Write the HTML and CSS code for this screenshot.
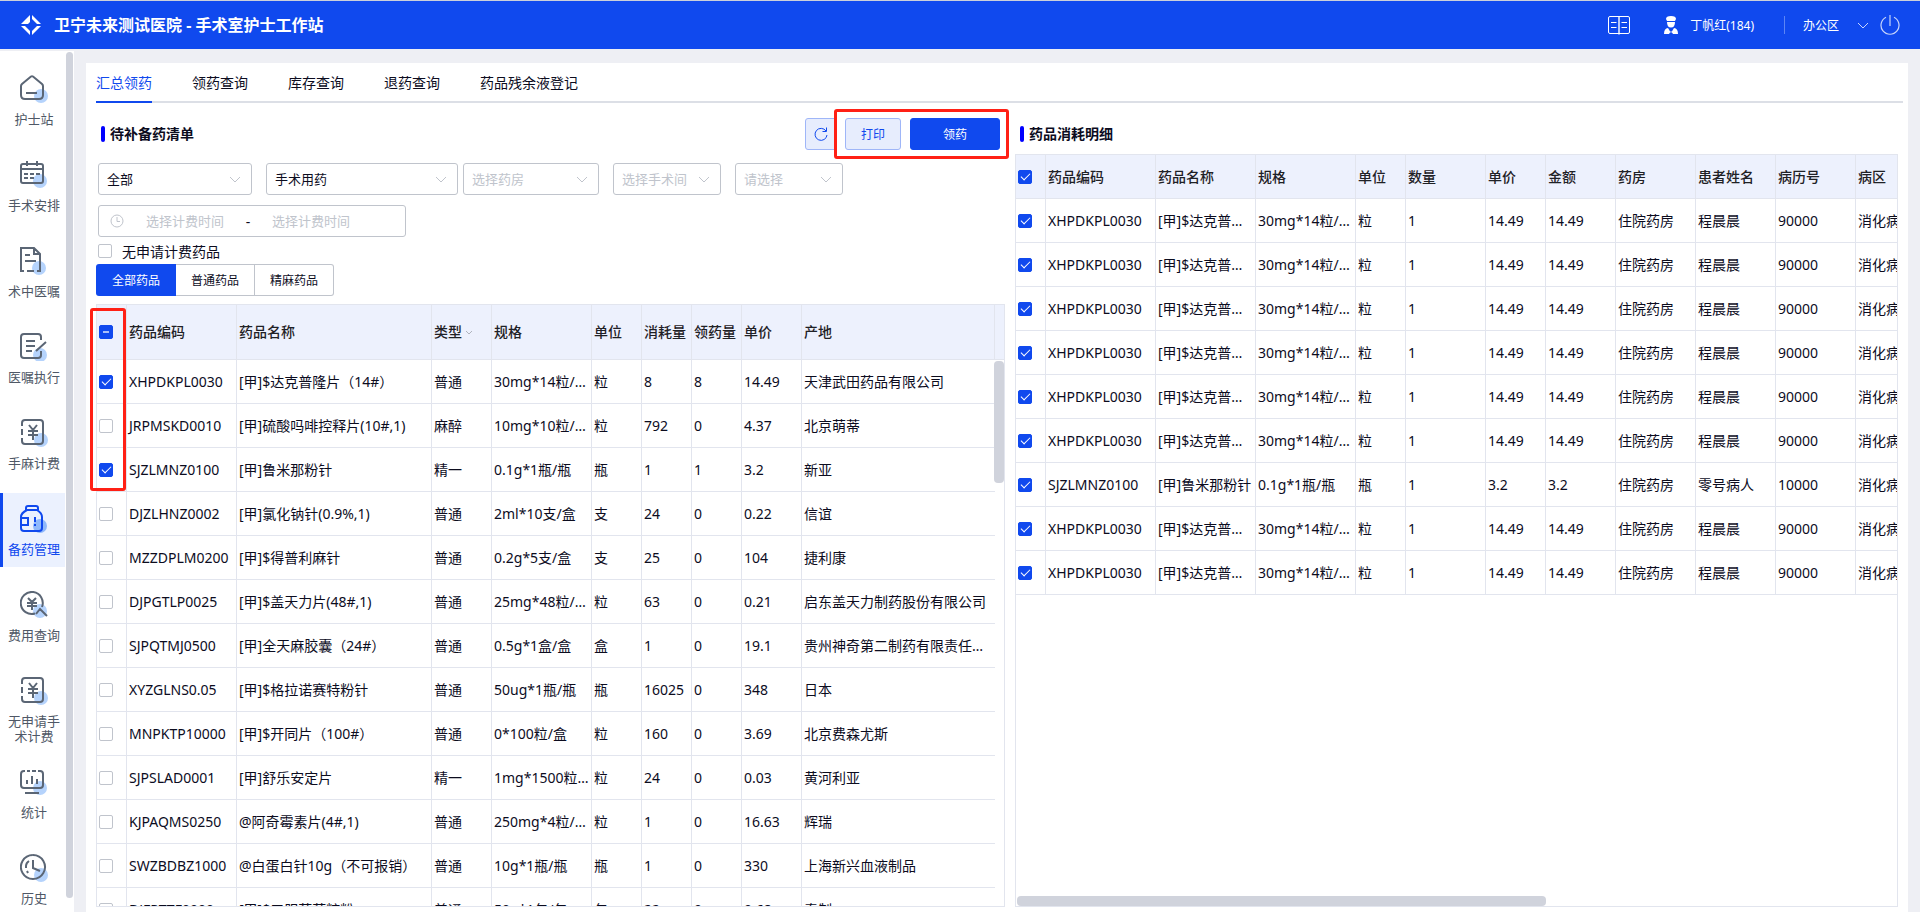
FILE: index.html
```html
<!DOCTYPE html>
<html lang="zh-CN">
<head>
  <meta charset="UTF-8" />
  <title>手术室护士工作站</title>
  <link rel="stylesheet" href="styles.css">
</head>
<body>
  <header class="topbar">
    <svg class="logo" viewBox="0 0 22 22" width="22" height="22" fill="#fff">
      <path d="M10 1 V8 L8 10 H1 Z"/>
      <path d="M12 1 L21 10 H17 L12 5 Z"/>
      <path d="M1 12 H5 L10 17 V21 Z"/>
      <path d="M21 12 L12 21 V17 L17 12 Z"/>
    </svg>
    <h1>卫宁未来测试医院 - 手术室护士工作站</h1>
    <div class="topbar-right">
      <svg class="book" viewBox="0 0 22 20" width="22" height="20" fill="none" stroke="#fff">
        <path d="M2 1.500 H20 Q21.500 1.500 21.500 3 V17 Q21.500 18.500 20 18.500 H2 Q.5 18.500 .5 17 V3 Q.5 1.500 2 1.500 Z"/>
        <path d="M11 2 V19.500" stroke-width="2" opacity=".7"/>
        <path d="M3 7.500 H8.500 M3 12.500 H8.500 M13.500 7.500 H19 M13.500 12.500 H19"/>
      </svg>
      <svg class="nurse" viewBox="0 0 14 18" width="14" height="18" fill="#fff">
        <path d="M2 3 Q2 0 7 0 Q12 0 12 3 L11 5 H3 Z"/>
        <path d="M3 6 H11 Q11 11.500 7 11.500 Q3 11.500 3 6 Z"/>
        <path d="M0 18 Q0 12.500 4 12 L7 17 L10 12 Q14 12.500 14 18 H9 L7 15 L5 18 Z"/>
      </svg>
      <span class="user-name">丁帆红(184)</span>
      <span class="divider"></span>
      <span>办公区</span>
      <svg class="area-arrow" viewBox="0 0 12 7" width="12" height="7" fill="none" stroke="#c7d5fb"><path d="M1 1 L6 6 L11 1"/></svg>
      <svg viewBox="0 0 20 20" width="20" height="20" fill="none" stroke="#c7d5fb" stroke-width="1.200"><path d="M6 2.200 A9 9 0 1 0 14 2.200 M10 0 V11"/></svg>
    </div>
  </header>

  <div class="layout">
    <nav class="sidebar">
      <a class="nav-item" href="#">
        <svg viewBox="0 0 28 28" width="28" height="28"><circle cx="21" cy="21" r="7"/>
          <path d="M11 1.500 Q12 .8 13 1.500 L22 9 Q23 10 23 11 V20 Q23 24 19 24 H5 Q1 24 1 20 V11 Q1 10 2 9 Z M6 18 H17"/></svg>
        <span>护士站</span>
      </a>
      <a class="nav-item" href="#">
        <svg viewBox="0 0 28 28" width="28" height="28"><circle cx="20" cy="20" r="7"/>
          <path d="M1 5 Q1 3 3 3 H21 Q23 3 23 5 V20 Q23 22 21 22 H3 Q1 22 1 20 Z M1 8 H23 M7 0 V5 M17 0 V5 M4 13 H8 M10 13 H14 M16 13 H20 M4 17 H8 M10 17 H14"/></svg>
        <span>手术安排</span>
      </a>
      <a class="nav-item" href="#">
        <svg viewBox="0 0 28 28" width="28" height="28"><circle cx="19" cy="21" r="7"/>
          <path d="M4 24 H1 V1 H14 L20 7 V24 H17 M7 24 H14 M14 1 V7 H20 M5 8 H10 M5 14 H16"/></svg>
        <span>术中医嘱</span>
      </a>
      <a class="nav-item" href="#">
        <svg viewBox="0 0 28 28" width="28" height="28"><circle cx="20" cy="22" r="7"/>
          <path d="M21 7 V4 Q21 1 18 1 H4 Q1 1 1 4 V22 Q1 25 4 25 H18 Q21 25 21 22 V18 M26 9 L16 18 M6 8 H15 M6 13 H15 M6 18 H12"/></svg>
        <span>医嘱执行</span>
      </a>
      <a class="nav-item" href="#">
        <svg viewBox="0 0 28 28" width="28" height="28"><circle cx="21" cy="21" r="7"/>
          <path d="M2 7 V4 Q2 1 5 1 H20 Q23 1 23 4 V22 Q23 25 20 25 H5 Q2 25 2 22 V19 M2 10 V16 M9 6 L13 11 L17 6 M8 12 H18 M8 16 H18 M13 11 V21"/></svg>
        <span>手麻计费</span>
      </a>
      <a class="nav-item active" href="#">
        <svg viewBox="0 0 28 28" width="28" height="28"><circle cx="20" cy="21" r="7"/>
          <path d="M6 5 V3 Q6 1 8 1 H16 Q18 1 18 3 V5 M7 5 H17 Q22 8 22 12 V23 Q22 26 19 26 H4 Q1 26 1 23 V12 Q1 8 7 5 M1 13 H8 V20 H1 M15 12 V17 M15 19 V21"/></svg>
        <span>备药管理</span>
      </a>
      <a class="nav-item" href="#">
        <svg viewBox="0 0 28 28" width="28" height="28"><circle cx="20" cy="20" r="7"/>
          <path d="M15 22.500 A11 11 0 1 1 22 16 M8 7 L12 11 L16 7 M7 12 H17 M7 15 H17 M12 11 V19 M16 23 L20 18 L27 25"/></svg>
        <span>费用查询</span>
      </a>
      <a class="nav-item" href="#">
        <svg viewBox="0 0 28 28" width="28" height="28"><circle cx="21" cy="21" r="7"/>
          <path d="M2 7 V4 Q2 1 5 1 H20 Q23 1 23 4 V22 Q23 25 20 25 H5 Q2 25 2 22 V19 M2 10 V16 M9 6 L13 11 L17 6 M8 12 H18 M8 16 H18 M13 11 V21"/></svg>
        <span>无申请手术计费</span>
      </a>
      <a class="nav-item" href="#">
        <svg viewBox="0 0 28 28" width="28" height="28"><circle cx="20" cy="20" r="7"/>
          <path d="M5 3 H4 Q1 3 1 6 V17 Q1 20 4 20 H20 Q23 20 23 17 V6 Q23 3 20 3 H18 M7 3 H10 M12 3 H16 M7 12 V16 M12 8 V16 M17 11 V16 M5 25 H19"/></svg>
        <span>统计</span>
      </a>
      <a class="nav-item" href="#">
        <svg viewBox="0 0 28 28" width="28" height="28"><circle cx="21" cy="21" r="7"/>
          <path d="M13 1 A12 12 0 1 1 12.900 1 M13 6 V14 L20 17 M9 7 Q6 9 6 12 V14 M7 17 L8 19"/></svg>
        <span>历史</span>
      </a>
    </nav>
    <div class="sidebar-scroll"><div class="sidebar-thumb"></div></div>

    <main class="main">
      <div class="tabs">
        <a class="tab active" href="#">汇总领药</a>
        <a class="tab" href="#">领药查询</a>
        <a class="tab" href="#">库存查询</a>
        <a class="tab" href="#">退药查询</a>
        <a class="tab" href="#">药品残余液登记</a>
      </div>

      <div class="panels">
        <section class="panel">
          <div class="panel-head">
            <h2>待补备药清单</h2>
            <button class="btn btn-plain btn-refresh" type="button" aria-label="刷新">
              <svg viewBox="0 0 14 14" width="14" height="14" fill="none" stroke="currentColor"><path d="M12 4 A6 6 0 1 0 13 8 M12.500 .5 V4.500 H8.500"/></svg>
            </button>
            <div class="marked">
              <button class="btn btn-plain btn-print" type="button">打印</button>
              <button class="btn btn-primary btn-take" type="button">领药</button>
              <span class="mark mark-buttons"></span>
            </div>
          </div>

          <div class="filters">
            <div class="select select-scope">
              <select aria-label="范围"><option>全部</option></select>
              <svg viewBox="0 0 12 7" width="12" height="7"><path d="M1 1 L6 6 L11 1"/></svg>
            </div>
            <div class="select select-use">
              <select aria-label="用药类型"><option>手术用药</option></select>
              <svg viewBox="0 0 12 7" width="12" height="7"><path d="M1 1 L6 6 L11 1"/></svg>
            </div>
            <div class="select select-pharmacy">
              <select class="empty" aria-label="药房"><option>选择药房</option></select>
              <svg viewBox="0 0 12 7" width="12" height="7"><path d="M1 1 L6 6 L11 1"/></svg>
            </div>
            <div class="select select-room">
              <select class="empty" aria-label="手术间"><option>选择手术间</option></select>
              <svg viewBox="0 0 12 7" width="12" height="7"><path d="M1 1 L6 6 L11 1"/></svg>
            </div>
            <div class="select select-room">
              <select class="empty" aria-label="其他"><option>请选择</option></select>
              <svg viewBox="0 0 12 7" width="12" height="7"><path d="M1 1 L6 6 L11 1"/></svg>
            </div>
          </div>

          <div class="date-range">
            <svg viewBox="0 0 14 14" width="14" height="14" fill="none" stroke="#c0c4cc"><circle cx="7" cy="7" r="6"/><path d="M7 3 V7.500 H10"/></svg>
            <input type="text" placeholder="选择计费时间" aria-label="开始时间">
            <span>-</span>
            <input type="text" placeholder="选择计费时间" aria-label="结束时间">
          </div>

          <label class="check-line"><input type="checkbox"> 无申请计费药品</label>

          <div class="segment">
            <button class="active" type="button">全部药品</button>
            <button type="button">普通药品</button>
            <button type="button">精麻药品</button>
          </div>

          <div class="table-area">
            <div class="table-wrap">
              <table class="drug-table">
                <colgroup>
                  <col class="w30"><col class="w110"><col class="w195"><col class="w60"><col class="w100"><col class="w50">
                  <col class="w50"><col class="w50"><col class="w60"><col><col class="w9">
                </colgroup>
                <thead>
                  <tr>
                    <th><input type="checkbox" id="check-all" aria-label="全选"></th>
                    <th>药品编码</th><th>药品名称</th>
                    <th>类型<svg class="th-arrow" viewBox="0 0 8 5" width="8" height="5"><path d="M1 1 L4 4 L7 1"/></svg></th>
                    <th>规格</th><th>单位</th><th>消耗量</th><th>领药量</th><th>单价</th><th>产地</th><th></th>
                  </tr>
                </thead>
                <tbody id="drug-rows"></tbody>
              </table>
              <div class="thumb-v"></div>
            </div>
            <span class="mark mark-checks"></span>
          </div>
        </section>

        <section class="panel">
          <div class="panel-head">
            <h2>药品消耗明细</h2>
          </div>
          <div class="table-area detail-area">
            <div class="table-wrap">
              <table class="detail-table">
                <colgroup>
                  <col class="w30"><col class="w110"><col class="w100"><col class="w100"><col class="w50"><col class="w80">
                  <col class="w60"><col class="w70"><col class="w80"><col class="w80"><col class="w80"><col class="w110">
                </colgroup>
                <thead>
                  <tr>
                    <th><input type="checkbox" checked aria-label="全选"></th>
                    <th>药品编码</th><th>药品名称</th><th>规格</th><th>单位</th><th>数量</th>
                    <th>单价</th><th>金额</th><th>药房</th><th>患者姓名</th><th>病历号</th><th>病区</th>
                  </tr>
                </thead>
                <tbody id="detail-rows"></tbody>
              </table>
              <div class="thumb-h"></div>
            </div>
          </div>
        </section>
      </div>
    </main>
  </div>

  <script>
    const drugs = [
      [1, 'XHPDKPL0030', '[甲]$达克普隆片（14#）', '普通', '30mg*14粒/盒装', '粒', '8', '8', '14.49', '天津武田药品有限公司'],
      [0, 'JRPMSKD0010', '[甲]硫酸吗啡控释片(10#,1)', '麻醉', '10mg*10粒/盒装', '粒', '792', '0', '4.37', '北京萌蒂'],
      [1, 'SJZLMNZ0100', '[甲]鲁米那粉针', '精一', '0.1g*1瓶/瓶', '瓶', '1', '1', '3.2', '新亚'],
      [0, 'DJZLHNZ0002', '[甲]氯化钠针(0.9%,1)', '普通', '2ml*10支/盒', '支', '24', '0', '0.22', '信谊'],
      [0, 'MZZDPLM0200', '[甲]$得普利麻针', '普通', '0.2g*5支/盒', '支', '25', '0', '104', '捷利康'],
      [0, 'DJPGTLP0025', '[甲]$盖天力片(48#,1)', '普通', '25mg*48粒/盒装', '粒', '63', '0', '0.21', '启东盖天力制药股份有限公司'],
      [0, 'SJPQTMJ0500', '[甲]全天麻胶囊（24#）', '普通', '0.5g*1盒/盒', '盒', '1', '0', '19.1', '贵州神奇第二制药有限责任公司'],
      [0, 'XYZGLNS0.05', '[甲]$格拉诺赛特粉针', '普通', '50ug*1瓶/瓶', '瓶', '16025', '0', '348', '日本'],
      [0, 'MNPKTP10000', '[甲]$开同片（100#）', '普通', '0*100粒/盒', '粒', '160', '0', '3.69', '北京费森尤斯'],
      [0, 'SJPSLAD0001', '[甲]舒乐安定片', '精一', '1mg*1500粒/瓶', '粒', '24', '0', '0.03', '黄河利亚'],
      [0, 'KJPAQMS0250', '@阿奇霉素片(4#,1)', '普通', '250mg*4粒/盒装', '粒', '1', '0', '16.63', '辉瑞'],
      [0, 'SWZBDBZ1000', '@白蛋白针10g（不可报销）', '普通', '10g*1瓶/瓶', '瓶', '1', '0', '330', '上海新兴血液制品'],
      [0, 'DJFPTTF0000', '[甲]$口服葡萄糖粉', '普通', '50g*1包/包', '包', '22', '0', '0.68', '奉制']
    ];

    const lansoprazole = ['XHPDKPL0030', '[甲]$达克普隆片（14#）', '30mg*14粒/盒装', '粒', '1', '14.49', '14.49', '住院药房', '程晨晨', '90000', '消化病区'];
    const luminal = ['SJZLMNZ0100', '[甲]鲁米那粉针', '0.1g*1瓶/瓶', '瓶', '1', '3.2', '3.2', '住院药房', '零号病人', '10000', '消化病区'];
    const details = Array(9).fill(lansoprazole);
    details[6] = luminal;

    function row(checked, cells) {
      const box = `<td><input type="checkbox" aria-label="选择 ${cells[0]}"${checked ? ' checked' : ''}></td>`;
      return `<tr>${box}${cells.map(c => `<td>${c}</td>`).join('')}</tr>`;
    }

    document.getElementById('drug-rows').innerHTML = drugs.map(d => row(d[0], [...d.slice(1), ''])).join('');
    document.getElementById('detail-rows').innerHTML = details.map(d => row(true, d)).join('');
    document.getElementById('check-all').indeterminate = true;
  </script>
</body>
</html>
```

FILE: styles.css
```css
* {
  box-sizing: border-box;
}
body {
  margin: 0;
  height: 100vh;
  display: flex;
  flex-direction: column;
  overflow: hidden;
  background-color: #eeeff4;
  color: #0c0c1e;
  font-family: "Noto Sans", "Noto Sans CJK SC", sans-serif;
  font-size: 14px;
}
h1, h2 {
  margin: 0;
}
a {
  color: inherit;
  text-decoration: none;
}
button, input, select {
  font-family: inherit;
}

/* top bar */
.topbar {
  display: flex;
  align-items: center;
  height: 49px;
  padding: 0 20px;
  border-top: 1px solid #ccd0da;
  background-color: #1049ee;
  color: white;
}
.logo {
  margin-right: 12px;
}
.topbar h1 {
  font-size: 16px;
  line-height: 24px;
}
.topbar-right {
  display: flex;
  align-items: center;
  margin-left: auto;
  font-size: 12px;
}
.book {
  margin-right: 34px;
}
.nurse {
  margin-right: 12px;
}
.divider {
  width: 1px;
  height: 18px;
  margin: 0 18px 0 30px;
  background-color: #5c85f5;
}
.area-arrow {
  margin: 0 11px 0 18px;
}

/* sidebar */
.layout {
  flex: 1;
  min-height: 0;
  display: flex;
  padding-top: 2px;
}
.sidebar {
  width: 65px;
  padding-top: 12px;
  overflow: hidden;
  background-color: white;
}
.nav-item {
  display: flex;
  flex-direction: column;
  align-items: center;
  min-height: 74px;
  margin-bottom: 12px;
  padding-top: 12px;
  border-left: 3px solid transparent;
  color: #4f5866;
  font-size: 13px;
  line-height: 15px;
  text-align: center;
}
.nav-item span {
  width: 54px;
  margin-top: 9px;
}
.nav-item svg {
  flex: none;
  fill: none;
  stroke: #5b6675;
  stroke-width: 2;
}
.nav-item circle {
  fill: #b5d3fc;
  stroke: none;
}
.nav-item.active {
  border-left-color: #1049ee;
  background-color: #ebf1fe;
  color: #1049ee;
}
.nav-item.active svg {
  stroke: #1049ee;
}
.nav-item.active circle {
  fill: #8fb8fa;
}
.sidebar-scroll {
  width: 9px;
  padding: 1px 1px 14px;
  background-color: white;
}
.sidebar-thumb {
  height: 100%;
  border-radius: 4px;
  background-color: #d0d3dc;
}

/* main */
.main {
  flex: 1;
  min-width: 0;
  display: flex;
  flex-direction: column;
  margin: 12px 12px 0;
  padding: 0 5px 5px 10px;
  background-color: white;
}
.tabs {
  display: flex;
  gap: 40px;
  border-bottom: 2px solid #dcdfe6;
}
.tab {
  padding: 9px 0 7px;
  margin-bottom: -2px;
  border-bottom: 2px solid transparent;
  line-height: 22px;
}
.tab.active {
  border-bottom-color: #1049ee;
  color: #1049ee;
}
.panels {
  flex: 1;
  min-height: 0;
  display: grid;
  grid-template-columns: minmax(0, 909fr) minmax(0, 883fr);
  gap: 10px;
  padding-right: 5px;
}
.panel {
  min-height: 0;
  display: flex;
  flex-direction: column;
  padding-top: 15px;
}
.panel-head {
  display: flex;
  align-items: center;
  gap: 8px;
  height: 32px;
  padding: 0 5px;
}
.panel-head h2 {
  display: flex;
  align-items: center;
  margin-right: auto;
  font-size: 14px;
  line-height: 20px;
}
.panel-head h2::before {
  content: "";
  width: 4px;
  height: 16px;
  margin-right: 5px;
  border-radius: 2px;
  background-color: #0000ff;
}

/* buttons */
.btn {
  height: 32px;
  padding: 0;
  border: 1px solid #1049ee;
  border-radius: 3px;
  font-size: 12px;
  cursor: pointer;
}
.btn-plain {
  border-color: #9fb6f8;
  background-color: #e7edfd;
  color: #1049ee;
}
.btn-primary {
  background-color: #1049ee;
  color: white;
}
.btn-refresh {
  display: grid;
  place-items: center;
  width: 32px;
}
.btn-print {
  width: 56px;
}
.btn-take {
  width: 90px;
}
.marked {
  position: relative;
  display: flex;
  gap: 9px;
}
.mark {
  position: absolute;
  border: 3px solid #ff2015;
  border-radius: 3px;
  pointer-events: none;
}
.mark-buttons {
  inset: -9px -9px -9px -11px;
}
.mark-checks {
  top: 4px;
  left: -6px;
  width: 36px;
  height: 183px;
}

/* filters */
.filters {
  display: flex;
  gap: 14px;
  margin: 13px 0 10px 2px;
}
.select {
  position: relative;
}
.select select {
  appearance: none;
  width: 100%;
  height: 32px;
  padding: 0 8px;
  border: 1px solid #c0c4cc;
  border-radius: 3px;
  background-color: white;
  color: #0c0c1e;
  font-size: 13px;
}
.select select.empty {
  color: #c0c4cc;
}
.select svg {
  position: absolute;
  top: 13px;
  right: 11px;
  fill: none;
  stroke: #c0c4cc;
  pointer-events: none;
}
.select-scope {
  width: 154px;
}
.select-use {
  width: 192px;
  margin-right: -9px;
}
.select-pharmacy {
  width: 136px;
}
.select-room {
  width: 108px;
}
.date-range {
  display: flex;
  align-items: center;
  width: 308px;
  height: 32px;
  margin-left: 2px;
  padding: 0 11px;
  border: 1px solid #c0c4cc;
  border-radius: 3px;
}
.date-range input {
  width: 92px;
  margin-left: 22px;
  padding: 0;
  border: none;
  outline: none;
  font-size: 13px;
}
.date-range input::placeholder {
  color: #c0c4cc;
}
.date-range span {
  width: 20px;
  text-align: center;
}
.date-range span + input {
  margin-left: 14px;
}
.check-line {
  display: flex;
  align-items: center;
  gap: 10px;
  height: 27px;
  margin-left: 2px;
}
input[type="checkbox"] {
  appearance: none;
  display: grid;
  place-items: center;
  width: 14px;
  height: 14px;
  margin: 0;
  border: 1px solid #c0c4cc;
  border-radius: 2px;
  background-color: white;
}
input[type="checkbox"]:checked,
input[type="checkbox"]:indeterminate {
  border-color: #1049ee;
  background-color: #1049ee;
}
input[type="checkbox"]:checked::after {
  content: "";
  width: 4px;
  height: 8px;
  margin-bottom: 2px;
  border: solid white;
  border-width: 0 1px 1px 0;
  transform: rotate(45deg);
}
input[type="checkbox"]:indeterminate::after {
  content: "";
  width: 6px;
  height: 2px;
  background-color: #a9bff9;
}
.segment {
  display: flex;
}
.segment button {
  width: 79px;
  height: 32px;
  padding: 0;
  border: 1px solid #c0c4cc;
  border-left: none;
  background-color: white;
  color: #0c0c1e;
  font-size: 12px;
}
.segment button:last-child {
  border-radius: 0 3px 3px 0;
}
.segment button.active {
  width: 80px;
  border: none;
  border-radius: 3px 0 0 3px;
  background-color: #1049ee;
  color: white;
}

/* tables */
.table-area {
  position: relative;
  flex: 1;
  min-height: 0;
  margin-top: 8px;
}
.detail-area {
  margin-top: 4px;
}
.table-wrap {
  position: relative;
  height: 100%;
  overflow: hidden;
  border: 1px solid #e2e5ee;
}
table {
  width: 100%;
  table-layout: fixed;
  border-collapse: separate;
  border-spacing: 0;
}
.detail-table {
  width: 950px;
}
th, td {
  height: 44px;
  padding: 0 2px;
  overflow: hidden;
  border-right: 1px solid #e2e5ee;
  border-bottom: 1px solid #e2e5ee;
  line-height: 22px;
  text-align: left;
  text-overflow: ellipsis;
  white-space: nowrap;
}
th {
  background-color: #edf1fd;
  color: #1f2126;
  font-weight: 500;
}
.drug-table th {
  height: 55px;
}
.drug-table th:last-child {
  border-right: none;
}
.drug-table td:last-child {
  border: none;
}
.drug-table td:nth-last-child(2) {
  border-right: none;
}
.th-arrow {
  margin: 0 0 2px 3px;
  fill: none;
  stroke: #b0b4bd;
}
.w9 { width: 9px; }
.w30 { width: 30px; }
.w50 { width: 50px; }
.w60 { width: 60px; }
.w70 { width: 70px; }
.w80 { width: 80px; }
.w100 { width: 100px; }
.w110 { width: 110px; }
.w195 { width: 195px; }

/* scroll thumbs over the tables */
.thumb-v,
.thumb-h {
  position: absolute;
  border-radius: 4px;
  background-color: #d0d3dc;
}
.thumb-v {
  top: 56px;
  right: 0;
  width: 10px;
  height: 122px;
}
.thumb-h {
  left: 1px;
  bottom: 0;
  width: 60%;
  height: 10px;
}
```
